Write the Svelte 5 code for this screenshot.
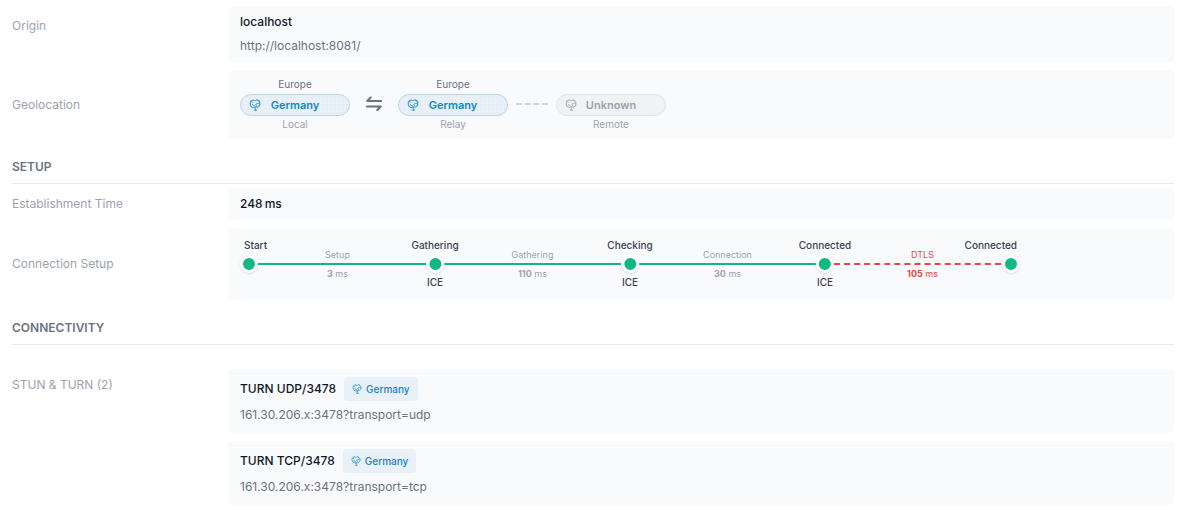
<script lang="ts">
  type Place = { continent: string; country: string; role: string; known: boolean };
  type Phase = { name: string; duration: number; secure: boolean };
  type Server = { name: string; address: string; country: string };

  const origin = { name: "localhost", url: "http://localhost:8081/" };

  const places: Place[] = [
    { continent: "Europe", country: "Germany", role: "Local", known: true },
    { continent: "Europe", country: "Germany", role: "Relay", known: true },
    { continent: "", country: "Unknown", role: "Remote", known: false },
  ];

  const establishmentTime = 248;

  const steps = [
    { state: "Start", layer: "" },
    { state: "Gathering", layer: "ICE" },
    { state: "Checking", layer: "ICE" },
    { state: "Connected", layer: "ICE" },
    { state: "Connected", layer: "" },
  ];

  const phases: Phase[] = [
    { name: "Setup", duration: 3, secure: false },
    { name: "Gathering", duration: 110, secure: false },
    { name: "Connection", duration: 30, secure: false },
    { name: "DTLS", duration: 105, secure: true },
  ];

  const servers: Server[] = [
    { name: "TURN UDP/3478", address: "161.30.206.x:3478?transport=udp", country: "Germany" },
    { name: "TURN TCP/3478", address: "161.30.206.x:3478?transport=tcp", country: "Germany" },
  ];
</script>

{#snippet globe()}
  <svg class="globe" viewBox="0 0 12 12" fill="none" stroke="currentColor" stroke-linecap="round" stroke-linejoin="round" aria-hidden="true">
    <path d="M4.200 1C2.400 1.200 1.200 2.600 1.200 4.400c0 2 1.500 3.800 3.900 4.100M8 .9c1.700.5 2.900 1.900 2.900 3.700 0 1.700-1 3.100-2.600 3.700" stroke-width="1.200"/>
    <path d="M2.200 2.400l1.300.8M4.200 1l1.700.8L8 .9l1.300 1.200M3.300 5l.8 1.500 1.200.3M10.600 4.600l-1.700-.3-1.800.5-.3 1.300 1.100.7" stroke-width="1"/>
    <path d="M5.600 7.800h1.900M6.300 8.200v3.100M5.400 11.200h2.200" stroke-width="1.300"/>
  </svg>
{/snippet}

{#snippet step(item: { state: string; layer: string })}
  <span class="state">{item.state}</span>
  <span class="dot"></span>
  <span class="layer">{item.layer}</span>
{/snippet}

<main>
  <div class="row">
    <div class="label top">Origin</div>
    <div class="value">
      <div class="strong">{origin.name}</div>
      <div class="muted">{origin.url}</div>
    </div>
  </div>

  <div class="row">
    <div class="label">Geolocation</div>
    <div class="value route">
      {#each places as place, i (place.role)}
        {#if i === 1}
          <svg class="arrows" viewBox="0 0 16 18" fill="none" stroke="currentColor" stroke-width="2.200" stroke-linecap="round" stroke-linejoin="round" aria-hidden="true">
            <path d="M15 6H1.300L4.600 2.500M1 11.500h13.700L11.400 15"/>
          </svg>
        {:else if i === 2}
          <span class="gap-line"></span>
        {/if}
        <div class="place">
          <span class="continent">{place.continent}</span>
          <span class="pill" class:unknown={!place.known}>
            {@render globe()}
            <span class="country">{place.country}</span>
          </span>
          <span class="role">{place.role}</span>
        </div>
      {/each}
    </div>
  </div>

  <h2>SETUP</h2>

  <div class="row">
    <div class="label">Establishment Time</div>
    <div class="value"><span class="strong">{establishmentTime}</span><span class="unit">ms</span></div>
  </div>

  <div class="row">
    <div class="label">Connection Setup</div>
    <div class="value">
      <ol class="timeline">
        {#each phases as phase, i (phase.name)}
          <li class:secure={phase.secure}>
            <div class="step" class:first={i === 0}>{@render step(steps[i])}</div>
            <span class="phase">{phase.name}</span>
            <span class="track"></span>
            <span class="duration"><b>{phase.duration}</b> ms</span>
            {#if i === phases.length - 1}
              <div class="step last">{@render step(steps[i + 1])}</div>
            {/if}
          </li>
        {/each}
      </ol>
    </div>
  </div>

  <h2>CONNECTIVITY</h2>

  <div class="row servers">
    <div class="label top">STUN &amp; TURN ({servers.length})</div>
    <div class="list">
      {#each servers as server (server.name)}
        <div class="value server">
          <div class="title">
            <span class="strong">{server.name}</span>
            <span class="chip">{@render globe()}{server.country}</span>
          </div>
          <div class="muted">{server.address}</div>
        </div>
      {/each}
    </div>
  </div>
</main>

<style>
  :global(body) {
    margin: 0;
    background: #fff;
  }
  main {
    display: flex;
    flex-direction: column;
    gap: 8px;
    padding: 6px 10px 10px 12px;
    font-family: Inter, "Liberation Sans", sans-serif;
    font-size: 12px;
    line-height: 24px;
    color: #111827;
  }

  h2 {
    margin: 8px 0 -4px;
    padding-bottom: 4px;
    border-bottom: 1px solid #e5e7eb;
    font-size: 12px;
    font-weight: 600;
    color: #6b7280;
  }

  /* rows */
  .row {
    display: grid;
    grid-template-columns: 216px minmax(0, 1fr);
    align-items: center;
  }
  .label {
    color: #9ca3af;
  }
  .label.top {
    align-self: start;
    padding-top: 8px;
  }
  .value {
    padding: 4px 12px;
    border-radius: 4px;
    background: #f9fafc;
  }
  .strong {
    font-weight: 500;
  }
  .unit {
    margin-left: 2px;
    font-weight: 500;
  }
  .muted {
    color: #6b7280;
  }

  /* geolocation */
  .route {
    display: flex;
    align-items: center;
    gap: 8px;
    padding: 6px 12px 7px;
  }
  .place {
    display: flex;
    flex-direction: column;
    align-items: center;
    font-size: 10px;
    line-height: 16px;
  }
  .continent {
    height: 18px;
    color: #6b7280;
  }
  .role {
    color: #9ca3af;
  }
  .pill {
    display: grid;
    grid-template-columns: 12px 1fr 12px;
    align-items: center;
    box-sizing: border-box;
    width: 110px;
    height: 22px;
    padding: 0 8px;
    border: 1px solid #bbd7ec;
    border-radius: 11px;
    background: radial-gradient(circle, #e0eaf3 0 15%, transparent 35%) 0 0 / 4px 4px, #e8f0f8;
    color: #0d87c8;
    font-size: 11px;
    font-weight: 600;
    text-align: center;
  }
  .pill.unknown {
    border-color: #e2e4e7;
    background: #f1f2f4;
    color: #9ca3af;
  }
  .globe {
    width: 12px;
    height: 12px;
    opacity: 0.7;
  }
  .arrows {
    width: 16px;
    height: 18px;
    margin: 0 8px;
    color: #6b7280;
  }
  .gap-line {
    width: 32px;
    border-top: 2px dashed #d1d5db;
  }

  /* timeline */
  .timeline {
    display: grid;
    grid-template-columns: repeat(4, minmax(0, 195px));
    margin: 0;
    padding: 4px 0;
    list-style: none;
  }
  li {
    position: relative;
    display: flex;
    flex-direction: column;
    align-items: center;
    justify-content: center;
    height: 56px;
    font-size: 9px;
    line-height: 17px;
    color: #9ca3af;
  }
  .track {
    align-self: stretch;
    margin: 0 9px;
    border-top: 2px solid #10b981;
  }
  .secure {
    color: #ef4444;
  }
  .secure .track {
    border-top: 2px dashed #ef4444;
  }
  .step {
    position: absolute;
    top: 0;
    left: 0;
    z-index: 1;
    display: flex;
    flex-direction: column;
    align-items: center;
    height: 56px;
    transform: translateX(-50%);
    font-size: 10px;
    font-weight: 500;
    line-height: 19px;
    color: #374151;
  }
  .step.first {
    align-items: flex-start;
    transform: none;
  }
  .step.last {
    right: 0;
    left: auto;
    align-items: flex-end;
    transform: none;
  }
  .first .state {
    padding-left: 4px;
  }
  .last .state {
    padding-right: 3px;
  }
  .dot {
    box-sizing: border-box;
    width: 18px;
    height: 18px;
    border: 3px solid #fff;
    border-radius: 50%;
    background: #10b981;
    box-shadow: 0 1px 2px rgba(0, 0, 0, 0.12);
  }

  /* servers */
  .servers {
    margin-top: 20px;
  }
  .servers .label {
    padding-top: 4px;
  }
  .list {
    display: flex;
    flex-direction: column;
    gap: 8px;
  }
  .server {
    display: flex;
    flex-direction: column;
    gap: 2px;
    padding: 8px 12px 6px;
  }
  .title {
    display: flex;
    align-items: center;
    gap: 8px;
  }
  .chip {
    display: inline-flex;
    align-items: center;
    gap: 4px;
    padding: 0 8px;
    border-radius: 4px;
    background: #e8f0f8;
    color: #0d87c8;
    font-size: 10px;
    font-weight: 500;
  }
  .chip .globe {
    width: 10px;
    height: 10px;
  }
</style>
